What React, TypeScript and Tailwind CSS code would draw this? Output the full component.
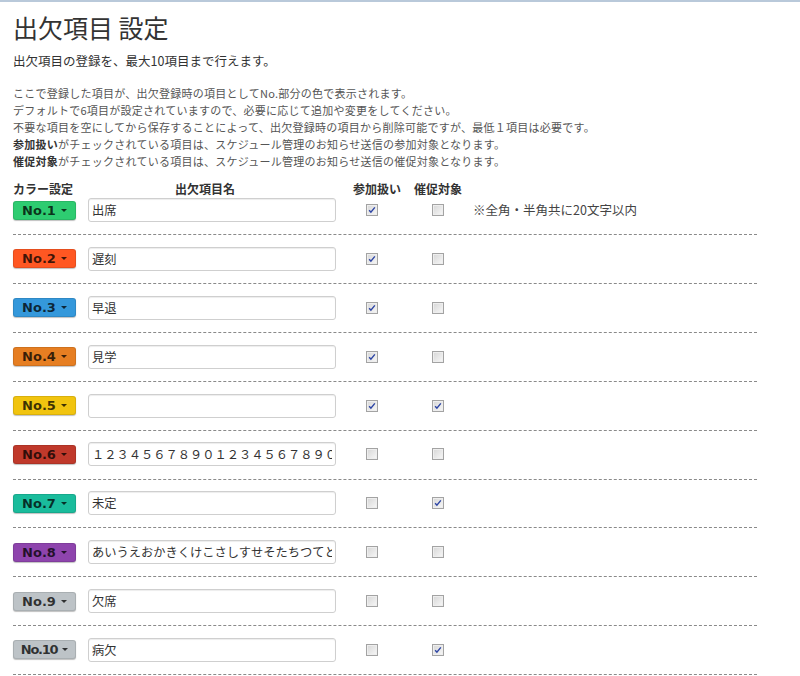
import React from 'react'

type Row = {
  no: string
  bg: string
  name: string
  join: boolean
  remind: boolean
  tight?: boolean
}

const rows: Row[] = [
  { no: 'No.1', bg: 'bg-[#2ecc71]', name: '出席', join: true, remind: false },
  { no: 'No.2', bg: 'bg-[#ff5722]', name: '遅刻', join: true, remind: false },
  { no: 'No.3', bg: 'bg-[#3498db]', name: '早退', join: true, remind: false },
  { no: 'No.4', bg: 'bg-[#e67e22]', name: '見学', join: true, remind: false },
  { no: 'No.5', bg: 'bg-[#f1c40f]', name: '', join: true, remind: true },
  { no: 'No.6', bg: 'bg-[#c0392b]', name: '１２３４５６７８９０１２３４５６７８９０', join: false, remind: false },
  { no: 'No.7', bg: 'bg-[#1abc9c]', name: '未定', join: false, remind: true },
  { no: 'No.8', bg: 'bg-[#8e44ad]', name: 'あいうえおかきくけこさしすせそたちつてと', join: false, remind: false },
  { no: 'No.9', bg: 'bg-[#bdc3c7]', name: '欠席', join: false, remind: false },
  { no: 'No.10', bg: 'bg-[#bdc3c7]', name: '病欠', join: false, remind: true, tight: true },
]

// old-style grey checkbox, the native one renders too modern
function Check({ on }: { on: boolean }) {
  return (
    <span className="relative inline-block size-[12px] border border-[#a3a3a3] bg-linear-to-br from-[#d6d6d6] to-[#f8f8f8] shadow-[inset_0_0_0_1px_#eeeeee]">
      {on && (
        <svg viewBox="0 0 12 12" className="absolute inset-0 size-full">
          <path d="M2.6 6.2 L4.7 8.6 L9.4 2.8" fill="none" stroke="#2c44a4" strokeWidth="1.7" />
        </svg>
      )}
    </span>
  )
}

function ColorButton({ row }: { row: Row }) {
  return (
    <button
      className={`${row.bg} flex h-[19px] w-[63px] shrink-0 items-center justify-center gap-[5px] rounded-[3px] border border-black/10 text-black/75 shadow-[0_1px_1px_rgba(0,0,0,0.25)] font-['DejaVu_Sans',sans-serif] text-[13px] font-bold leading-none`}
    >
      <span className={row.tight ? 'tracking-[-1.3px]' : ''}>{row.no}</span>
      <span className="h-0 w-0 border-x-[3px] border-t-[3px] border-x-transparent border-t-current" />
    </button>
  )
}

export default function App() {
  return (
    <div className="min-h-[676px] w-[800px] border-t-2 border-[#b9c9da] bg-white px-[13px] font-['Noto_Sans_CJK_JP',sans-serif] text-[#333]">
      {/* ── Heading ─────────────────────── */}
      <h1 className="pt-[9px] text-[25px] leading-[32px]">出欠項目 設定</h1>
      <p className="mt-[9px] text-[12.5px] leading-[18px]">出欠項目の登録を、最大10項目まで行えます。</p>

      {/* ── Notes ───────────────────────── */}
      <div className="mt-[15px] text-[11px] leading-[17px] tracking-[0.25px] text-[#555]">
        <p>ここで登録した項目が、出欠登録時の項目としてNo.部分の色で表示されます。</p>
        <p>デフォルトで6項目が設定されていますので、必要に応じて追加や変更をしてください。</p>
        <p>不要な項目を空にしてから保存することによって、出欠登録時の項目から削除可能ですが、最低１項目は必要です。</p>
        <p>
          <b className="text-[#333]">参加扱い</b>がチェックされている項目は、スケジュール管理のお知らせ送信の参加対象となります。
        </p>
        <p>
          <b className="text-[#333]">催促対象</b>がチェックされている項目は、スケジュール管理のお知らせ送信の催促対象となります。
        </p>
      </div>

      {/* ── Table ───────────────────────── */}
      <div className="mt-[11px] w-[744px]">
        <div className="mb-[1px] flex text-[12px] font-bold leading-[16px]">
          <span className="w-[75px]">カラー設定</span>
          <span className="w-[234px] text-center">出欠項目名</span>
          <span className="ml-[31px]">参加扱い</span>
          <span className="ml-[13px]">催促対象</span>
        </div>

        {rows.map((row, i) => (
          <div
            key={row.no}
            className={`flex items-center border-b border-dashed border-[#8a8a8a] pb-[12.2px] ${i === 0 ? 'pt-0' : 'pt-[11.7px]'}`}
          >
            <ColorButton row={row} />
            <input
              readOnly
              value={row.name}
              className="ml-[12px] h-[24px] w-[248px] rounded-[3px] border border-[#cfcfcf] px-[3px] text-[12.25px] text-[#333] shadow-[inset_0_1px_1px_rgba(0,0,0,0.075)] outline-none"
            />
            <div className="flex w-[72px] justify-center">
              <Check on={row.join} />
            </div>
            <div className="flex w-[60px] justify-center">
              <Check on={row.remind} />
            </div>
            {i === 0 && <span className="ml-[5px] text-[12.5px] text-[#444]">※全角・半角共に20文字以内</span>}
          </div>
        ))}
      </div>
    </div>
  )
}
